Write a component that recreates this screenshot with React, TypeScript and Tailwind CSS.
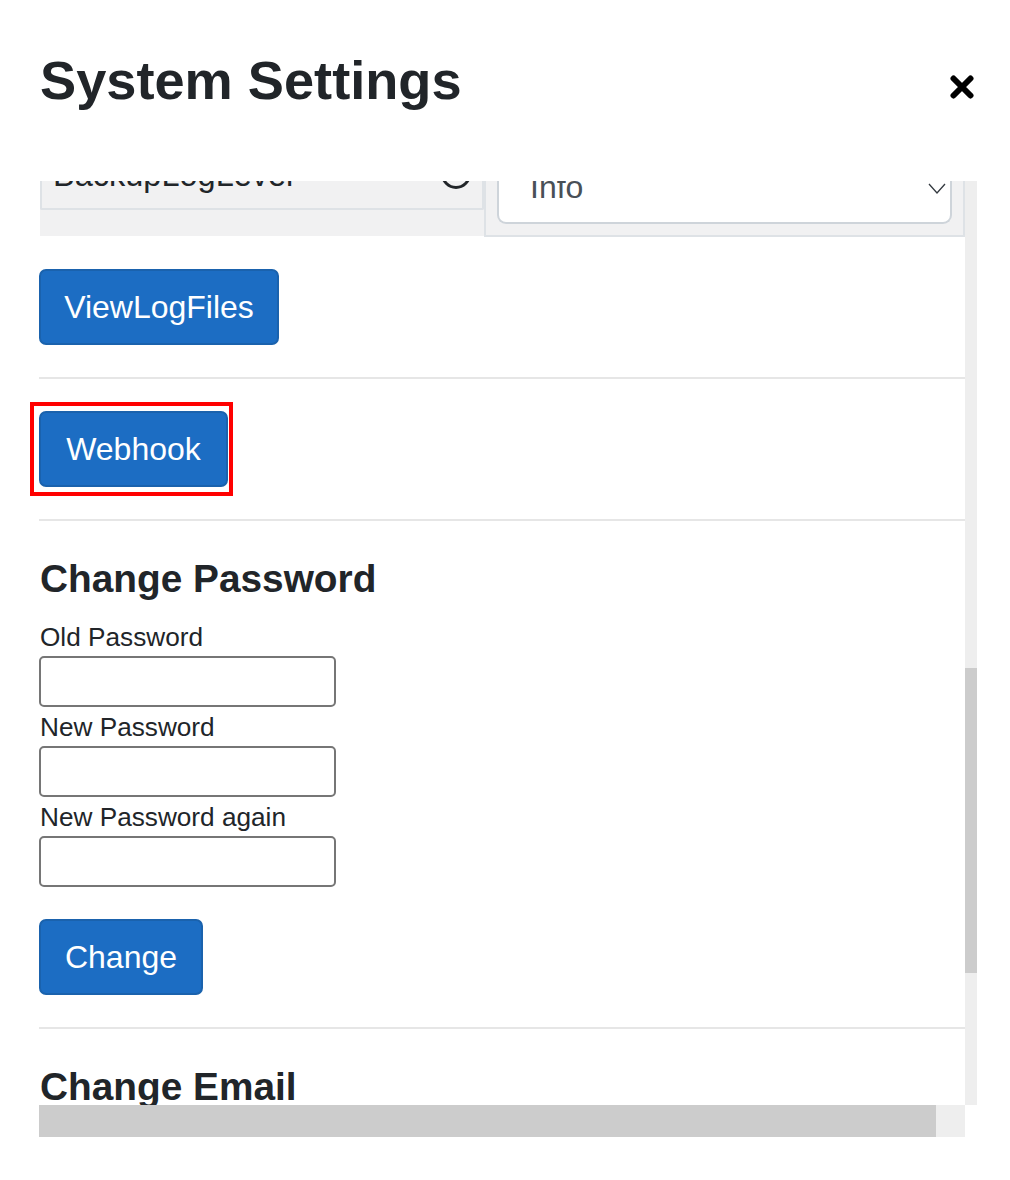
// App.tsx
import React from 'react'

const font = { fontFamily: '"Liberation Sans", Arial, sans-serif' }

const Divider = () => <div className="h-[2px] bg-[#e6e6e6]" />

const BlueButton = ({ label, width }: { label: string; width: string }) => (
  <button
    className={`${width} h-[76px] rounded-[7px] border-2 border-[#1a62ad] bg-[#1c6dc3] text-[32px] text-white`}
  >
    {label}
  </button>
)

const PasswordField = ({ label }: { label: string }) => (
  <div className="flex flex-col">
    <label className="h-[37px] pl-[1px] text-[26.2px] leading-[37px] text-[#212529]">{label}</label>
    <input
      type="password"
      className="h-[51px] w-[297px] rounded-[5px] border-2 border-[#767676] bg-white"
    />
  </div>
)

export default function App() {
  return (
    <div className="h-[1180px] w-[1010px] overflow-hidden bg-white text-[#212529]" style={font}>
      <header className="relative h-[181px]">
        <h1 className="pl-[40px] pt-[46px] text-[54.2px] font-bold leading-[68px]">System Settings</h1>
        <svg
          className="absolute left-[950px] top-[75px] h-[24px] w-[24px]"
          viewBox="0 0 24 24"
          fill="none"
          stroke="#000"
          strokeWidth="6"
          strokeLinecap="round"
        >
          <path d="M3.5 3.5 20.5 20.5M20.5 3.5 3.5 20.5" />
        </svg>
      </header>

      <div className="ml-[30px] flex w-[947px]">
        {/* starts 9px left of the content so the red highlight isn't clipped */}
        <div className="h-[924px] w-[935px] overflow-hidden pl-[9px]">
          {/* scrolled content, top row is cut off */}
          <div className="ml-[1px] flex h-[56px] items-start">
            <div className="h-[55px] w-[444px] bg-[#f1f1f2]">
              <div className="relative h-[29px] overflow-hidden rounded-b-[2px] border-x-2 border-b-2 border-[#dee2e6] pl-[11px]">
                <span className="absolute top-[-24px] text-[32.5px] leading-[36px]">BackupLogLevel</span>
                <span className="absolute left-[399px] top-[-22px] h-[30px] w-[30px] rounded-full border-[3px] border-[#212529]" />
              </div>
            </div>
            <div className="h-[56px] w-[481px] border-x-2 border-b-2 border-[#dee2e6] bg-[#f1f1f2] px-[11px]">
              <div className="relative h-[43px] overflow-hidden rounded-b-[9px] border-x-2 border-b-2 border-[#ced4da] bg-white pl-[31px]">
                <span className="absolute top-[-12px] text-[32px] leading-[36px] text-[#495057]">Info</span>
                <svg
                  className="absolute left-[428px] top-[1px] h-[14px] w-[20px]"
                  viewBox="0 0 20 14"
                  fill="none"
                  stroke="#343a40"
                  strokeWidth="1.3"
                >
                  <path d="M2 2 10 11 18 2" />
                </svg>
              </div>
            </div>
          </div>

          <div className="pt-[32px]">
            <BlueButton label="ViewLogFiles" width="w-[240px]" />
          </div>
          <div className="mt-[32px]">
            <Divider />
          </div>
          <div className="pt-[32px]">
            <div className="relative w-[189px]">
              <BlueButton label="Webhook" width="w-[189px]" />
              <div className="absolute -bottom-[9px] -left-[9px] -right-[5px] -top-[9px] border-4 border-[#ff0000]" />
            </div>
          </div>
          <div className="mt-[32px]">
            <Divider />
          </div>

          <h2 className="mt-[34px] pl-[1px] text-[38.8px] font-bold leading-[47px]">Change Password</h2>
          <div className="mt-[17px] flex flex-col gap-[2px]">
            <PasswordField label="Old Password" />
            <PasswordField label="New Password" />
            <PasswordField label="New Password again" />
          </div>
          <div className="mt-[32px]">
            <BlueButton label="Change" width="w-[164px]" />
          </div>
          <div className="mt-[32px]">
            <Divider />
          </div>
          <h2 className="mt-[34px] pl-[1px] text-[38.8px] font-bold leading-[47px]">Change Email</h2>
        </div>

        {/* vertical scrollbar */}
        <div className="h-[924px] w-[12px] bg-[#eeeeee] pt-[487px]">
          <div className="h-[305px] bg-[#cccccc]" />
        </div>
      </div>

      {/* horizontal scrollbar */}
      <div className="ml-[39px] h-[32px] w-[926px] bg-[#eeeeee]">
        <div className="h-full w-[897px] bg-[#cccccc]" />
      </div>
    </div>
  )
}
